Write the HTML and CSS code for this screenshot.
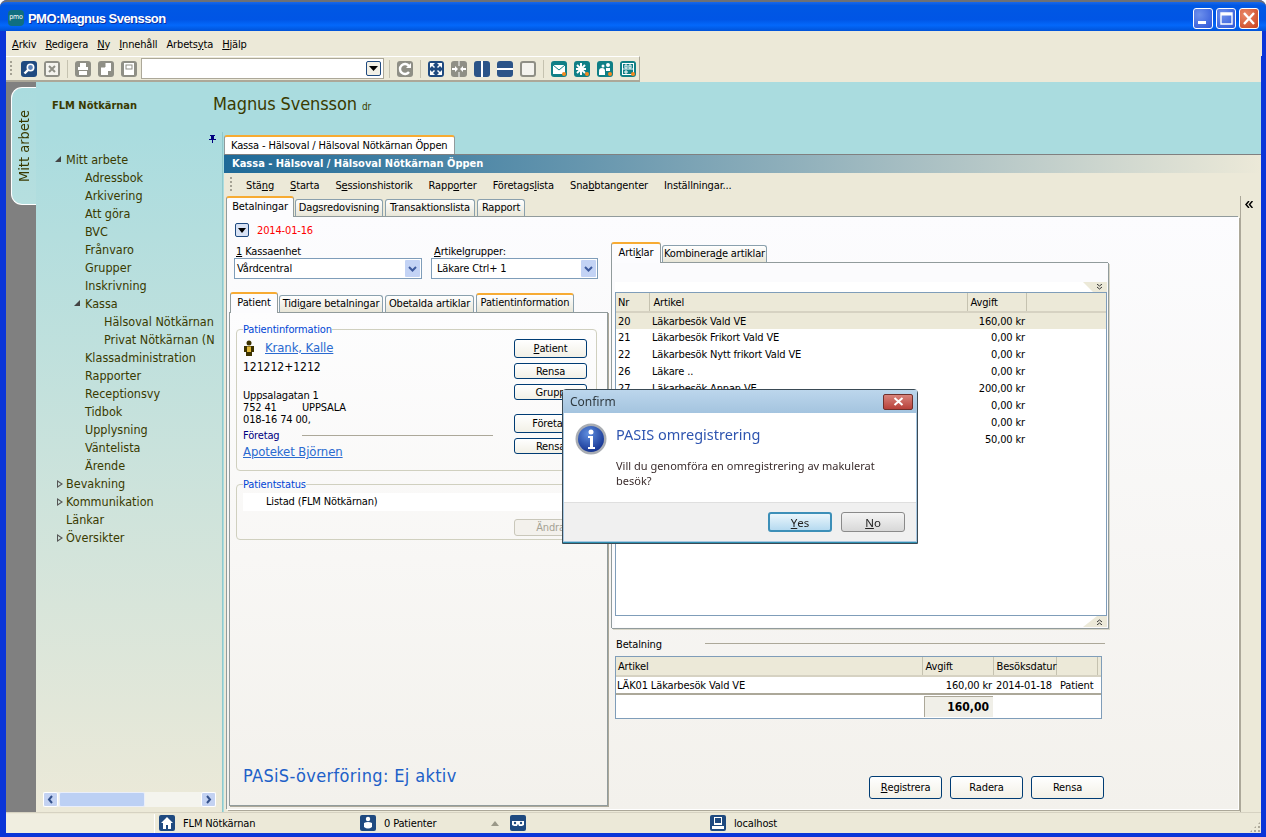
FILE: index.html
```html
<!DOCTYPE html>
<html lang="sv">
<head>
  <meta charset="UTF-8">
  <title>PMO:Magnus Svensson</title>
  <link rel="stylesheet" href="styles.css">
</head>
<body>
<div class="window">

  <!-- Titelrad -->
  <div class="titlebar">
    <span class="app-icon">pmo</span>
    <span class="title-text">PMO:Magnus Svensson</span>
    <div class="win-btns">
      <span class="win-btn"><svg width="20" height="21" viewBox="0 0 20 21"><rect x="5" y="13" width="8" height="3" fill="#fff"/></svg></span>
      <span class="win-btn"><svg width="20" height="21" viewBox="0 0 20 21"><path d="M5 5h11v11H5z" fill="none" stroke="#fff" stroke-width="1.4"/><rect x="5" y="5" width="11" height="2.5" fill="#fff"/></svg></span>
      <span class="win-btn win-close"><svg width="20" height="21" viewBox="0 0 20 21"><path d="M5 5l10 11M15 5L5 16" stroke="#fff" stroke-width="2.4"/></svg></span>
    </div>
  </div>

  <!-- Meny -->
  <div class="menubar">
    <span><u>A</u>rkiv</span>
    <span><u>R</u>edigera</span>
    <span><u>N</u>y</span>
    <span><u>I</u>nnehåll</span>
    <span>Arbets<u>y</u>ta</span>
    <span><u>H</u>jälp</span>
  </div>

  <!-- Verktygsrad -->
  <div class="toolbar-row">
    <div class="toolbar">
      <span class="grip"></span>
      <svg class="tool" viewBox="0 0 16 16"><rect width="16" height="16" rx="3" fill="#1f4a80"/><circle cx="9.500" cy="6.500" r="3.200" fill="#5b82b8" stroke="#fff" stroke-width="1.600"/><path d="M7 9l-3.500 3.500" stroke="#fff" stroke-width="2.400"/></svg>
      <svg class="tool" viewBox="0 0 16 16"><rect width="16" height="16" rx="3" fill="#8f8f86"/><rect x="2" y="2" width="12" height="12" fill="#f4f3ee"/><path d="M5 5l6 6M11 5l-6 6" stroke="#8f8f86" stroke-width="2"/></svg>
      <span class="tool-sep"></span>
      <svg class="tool" viewBox="0 0 16 16"><rect width="16" height="16" rx="3" fill="#8f8f86"/><path d="M5 2h6v4h2v3H3V6h2zM4 10h8v4H4z" fill="#fff"/></svg>
      <svg class="tool" viewBox="0 0 16 16"><rect width="16" height="16" rx="3" fill="#8f8f86"/><path d="M7 2h6v8h-3v4H3V6h4z" fill="#fff"/><path d="M7 2v4H3" fill="none" stroke="#8f8f86"/></svg>
      <svg class="tool" viewBox="0 0 16 16"><rect width="16" height="16" rx="3" fill="#8f8f86"/><rect x="3" y="2" width="10" height="12" fill="#fff"/><rect x="5" y="4" width="6" height="4" fill="none" stroke="#8f8f86"/></svg>
      <div class="tool-combo"><span class="combo-drop"><svg width="9" height="5" viewBox="0 0 9 5"><path d="M0 0h9L4.500 5z" fill="#000"/></svg></span></div>
      <span class="tool-sep"></span>
      <svg class="tool" viewBox="0 0 16 16"><rect width="16" height="16" rx="3" fill="#8f8f86"/><path d="M12 5a5 5 0 1 0 0 6" fill="none" stroke="#fff" stroke-width="2.400"/><path d="M9 7h5V2z" fill="#fff"/></svg>
      <span class="tool-sep"></span>
      <svg class="tool" viewBox="0 0 16 16"><rect width="16" height="16" rx="3" fill="#1f4a80"/><path d="M2 2h5L5 4l2 2-1 1-2-2-2 2zM14 2v5l-2-2-2 2-1-1 2-2-2-2zM2 14V9l2 2 2-2 1 1-2 2 2 2zM14 14H9l2-2-2-2 1-1 2 2 2-2z" fill="#fff"/></svg>
      <svg class="tool" viewBox="0 0 16 16"><rect width="16" height="16" rx="3" fill="#8f8f86"/><path d="M7 8l-3-3v2H1v2h3v2zM9 8l3-3v2h3v2h-3v2z" fill="#fff"/><path d="M8 0v5M8 11v5" stroke="#fff"/></svg>
      <svg class="tool" viewBox="0 0 16 16"><rect width="16" height="16" rx="3" fill="#2b5488"/><rect x="7" width="2" height="16" fill="#fff"/></svg>
      <svg class="tool" viewBox="0 0 16 16"><rect width="16" height="16" rx="3" fill="#2b5488"/><rect y="7" width="16" height="2" fill="#fff"/></svg>
      <svg class="tool" viewBox="0 0 16 16"><rect width="16" height="16" rx="3" fill="#8f8f86"/><rect x="2" y="2" width="12" height="12" rx="1" fill="#f4f3ee"/></svg>
      <span class="tool-sep"></span>
      <svg class="tool" viewBox="0 0 16 16"><rect width="16" height="16" rx="3" fill="#0f7f86"/><path d="M2 4h12v9H2z" fill="#fff"/><path d="M2 4l6 5 6-5" fill="none" stroke="#0f7f86"/><circle cx="13" cy="13" r="2" fill="#f58a1f"/></svg>
      <svg class="tool" viewBox="0 0 16 16"><rect width="16" height="16" rx="3" fill="#0f7f86"/><path d="M7 2v12M2 8h10M3 4l8 8M11 4l-8 8" stroke="#fff" stroke-width="2"/><circle cx="13" cy="13" r="2" fill="#f58a1f"/></svg>
      <svg class="tool" viewBox="0 0 16 16"><rect width="16" height="16" rx="3" fill="#0f7f86"/><circle cx="5" cy="10" r="3" fill="#fff"/><circle cx="6" cy="5" r="1.500" fill="#fff"/><circle cx="11" cy="4" r="2" fill="#fff"/><path d="M9 7h4v3H9z" fill="#fff"/><path d="M2 11h6v3H2z" fill="#fff"/><circle cx="13" cy="13" r="2" fill="#f58a1f"/></svg>
      <svg class="tool" viewBox="0 0 16 16"><rect width="16" height="16" rx="3" fill="#0f7f86"/><rect x="2.500" y="2.500" width="11" height="11" fill="none" stroke="#fff"/><path d="M3 8h10M5 4h2v3H5zM9 4h2v3H9zM5 10h2v2H5z" stroke="#fff" fill="none"/><circle cx="13" cy="13" r="2" fill="#f58a1f"/></svg>
    </div>
  </div>

  <div class="workspace">
    <!-- Vänster flik -->
    <div class="rail">
      <div class="rail-tab"><span>Mitt arbete</span></div>
    </div>

    <div class="stage">
      <div class="brand-row">
        <div class="brand-org">FLM Nötkärnan</div>
        <div class="brand-name">Magnus Svensson <small>dr</small></div>
      </div>

      <div class="lower">
        <!-- Navigering -->
        <div class="nav">
          <div class="nav-pin"><svg width="7" height="8" viewBox="0 0 7 8"><path d="M1 0h5v1H5v3h2v1H4v3H3V5H0V4h2V1H1z" fill="#00007f"/></svg></div>
          <ul class="tree">
            <li class="lvl0"><i class="arrow-open"></i>Mitt arbete</li>
            <li class="lvl1">Adressbok</li>
            <li class="lvl1">Arkivering</li>
            <li class="lvl1">Att göra</li>
            <li class="lvl1">BVC</li>
            <li class="lvl1">Frånvaro</li>
            <li class="lvl1">Grupper</li>
            <li class="lvl1">Inskrivning</li>
            <li class="lvl1"><i class="arrow-open"></i>Kassa</li>
            <li class="lvl2">Hälsoval Nötkärnan</li>
            <li class="lvl2">Privat Nötkärnan (N</li>
            <li class="lvl1">Klassadministration</li>
            <li class="lvl1">Rapporter</li>
            <li class="lvl1">Receptionsvy</li>
            <li class="lvl1">Tidbok</li>
            <li class="lvl1">Upplysning</li>
            <li class="lvl1">Väntelista</li>
            <li class="lvl1">Ärende</li>
            <li class="lvl0"><i class="arrow-closed"></i>Bevakning</li>
            <li class="lvl0"><i class="arrow-closed"></i>Kommunikation</li>
            <li class="lvl0">Länkar</li>
            <li class="lvl0"><i class="arrow-closed"></i>Översikter</li>
          </ul>
          <div class="hscroll">
            <span class="hs-btn"><svg width="7" height="9" viewBox="0 0 7 9"><path d="M5 1L2 4.500 5 8" fill="none" stroke="#33508a" stroke-width="2"/></svg></span>
            <span class="hs-thumb"></span>
            <span class="hs-btn"><svg width="7" height="9" viewBox="0 0 7 9"><path d="M2 1l3 3.500L2 8" fill="none" stroke="#33508a" stroke-width="2"/></svg></span>
          </div>
        </div>

        <!-- Dokument -->
        <div class="doc">
          <div class="doc-tabs"><span class="doc-tab">Kassa - Hälsoval / Hälsoval Nötkärnan Öppen</span></div>
          <div class="doc-frame">
            <div class="doc-caption">Kassa - Hälsoval / Hälsoval Nötkärnan Öppen</div>
            <div class="doc-menu">
              <span class="grip"></span>
              <span>Stä<u>n</u>g</span>
              <span><u>S</u>tarta</span>
              <span>S<u>e</u>ssionshistorik</span>
              <span>Rapp<u>o</u>rter</span>
              <span>Företags<u>l</u>ista</span>
              <span>Sna<u>b</u>btangenter</span>
              <span>Inställningar...</span>
            </div>
            <div class="doc-body">
              <div class="doc-main">
                <div class="tabs">
                  <span class="tab active tab-betal">Betalningar</span>
                  <span class="tab tab-dags">Dagsredovisning</span>
                  <span class="tab tab-trans">Transaktionslista</span>
                  <span class="tab tab-rapport">Rapport</span>
                </div>
                <div class="tab-panel">

                  <!-- Vänster kolumn -->
                  <div class="col-left">
                    <div class="date-row">
                      <span class="date-btn"><svg width="8" height="5" viewBox="0 0 8 5"><path d="M0 0h8L4 5z" fill="#000"/></svg></span>
                      <span class="date-text">2014-01-16</span>
                    </div>
                    <div class="fields">
                      <div class="field field-a">
                        <label><u>1</u> Kassaenhet</label>
                        <div class="combo">Vårdcentral<span class="combo-arrow"><svg width="9" height="6" viewBox="0 0 9 6"><path d="M1 1l3.500 3.500L8 1" fill="none" stroke="#3d5a9e" stroke-width="2"/></svg></span></div>
                      </div>
                      <div class="field field-b">
                        <label><u>A</u>rtikelgrupper:</label>
                        <div class="combo">Läkare Ctrl+ 1<span class="combo-arrow"><svg width="9" height="6" viewBox="0 0 9 6"><path d="M1 1l3.500 3.500L8 1" fill="none" stroke="#3d5a9e" stroke-width="2"/></svg></span></div>
                      </div>
                    </div>
                    <div class="tabs tabs-sub">
                      <span class="tab active tab-patient">Patient</span>
                      <span class="tab tab-tidigare">Tidi<u>g</u>are betalningar</span>
                      <span class="tab tab-obetalda">Obetalda artiklar</span>
                      <span class="tab tab-flag">Patientinformation</span>
                    </div>
                    <div class="sub-panel">
                      <fieldset class="group">
                        <legend>Patientinformation</legend>
                        <div class="pat-body">
                          <div class="pat-info">
                            <div class="pat-name">
                              <svg width="12" height="16" viewBox="0 0 12 16"><circle cx="6" cy="3" r="2.500" fill="#3d3300"/><path d="M1 6h10v6H9v4H3v-4H1z" fill="#3d3300"/><path d="M4 6.500h4V12H4z" fill="#e0b93a"/></svg>
                              <a class="link">Krank, Kalle</a>
                            </div>
                            <div class="pat-id">121212+1212</div>
                            <div class="pat-addr">
                              <div>Uppsalagatan 1</div>
                              <div class="addr-city"><span>752 41</span><span>UPPSALA</span></div>
                              <div>018-16 74 00,</div>
                            </div>
                            <div class="pat-sep"><span>Företag</span><i></i></div>
                            <a class="link link-block">Apoteket Björnen</a>
                          </div>
                          <div class="pat-btns">
                            <span class="btn"><u>P</u>atient</span>
                            <span class="btn btn-low">Rensa</span>
                            <span class="btn btn-low">Grupp</span>
                            <span class="btn btn-gap">Företag</span>
                            <span class="btn btn-low">Rensa</span>
                          </div>
                        </div>
                      </fieldset>
                      <fieldset class="group group-status">
                        <legend>Patientstatus</legend>
                        <div class="status-row">Listad (FLM Nötkärnan)</div>
                        <div class="status-foot"><span class="btn btn-off">Ändra</span></div>
                      </fieldset>
                      <div class="pasis">PASiS-överföring: Ej aktiv</div>
                    </div>
                  </div>

                  <!-- Höger kolumn -->
                  <div class="col-right">
                    <div class="tabs">
                      <span class="tab active tab-artiklar">Arti<u>k</u>lar</span>
                      <span class="tab tab-komb">Kombinera<u>d</u>e artiklar</span>
                    </div>
                    <div class="list-panel">
                      <div class="list-edge"><span class="corner corner-top"><svg width="7" height="6" viewBox="0 0 7 6"><path d="M1 0l2.500 2L6 0M1 3l2.500 2L6 3" fill="none" stroke="#333"/></svg></span></div>
                      <div class="grid">
                        <table class="data art-table">
                          <thead><tr><th>Nr</th><th>Artikel</th><th>Avgift</th><th></th></tr></thead>
                          <tbody>
                            <tr class="sel"><td>20</td><td>Läkarbesök Vald VE</td><td class="num">160,00 kr</td><td></td></tr>
                            <tr><td>21</td><td>Läkarbesök Frikort Vald VE</td><td class="num">0,00 kr</td><td></td></tr>
                            <tr><td>22</td><td>Läkarbesök Nytt frikort Vald VE</td><td class="num">0,00 kr</td><td></td></tr>
                            <tr><td>26</td><td>Läkare ..</td><td class="num">0,00 kr</td><td></td></tr>
                            <tr><td>27</td><td>Läkarbesök Annan VE</td><td class="num">200,00 kr</td><td></td></tr>
                            <tr><td></td><td></td><td class="num">0,00 kr</td><td></td></tr>
                            <tr><td></td><td></td><td class="num">0,00 kr</td><td></td></tr>
                            <tr><td></td><td></td><td class="num">50,00 kr</td><td></td></tr>
                          </tbody>
                        </table>
                      </div>
                      <div class="list-edge list-edge-low"><span class="corner corner-low"><svg width="7" height="6" viewBox="0 0 7 6"><path d="M1 3l2.500-2L6 3M1 6l2.500-2L6 6" fill="none" stroke="#333"/></svg></span></div>
                    </div>
                    <div class="pay-head"><span>Betalning</span><i></i></div>
                    <div class="pay-box">
                      <table class="data pay-table">
                        <thead><tr><th>Artikel</th><th>Avgift</th><th>Besöksdatur</th><th></th><th></th></tr></thead>
                        <tbody>
                          <tr><td>LÄK01 Läkarbesök Vald VE</td><td class="num">160,00 kr</td><td>2014-01-18</td><td colspan="2">Patient</td></tr>
                        </tbody>
                      </table>
                      <div class="pay-sum"><span>160,00</span></div>
                    </div>
                    <div class="pay-btns">
                      <span class="btn btn-big"><u>R</u>egistrera</span>
                      <span class="btn btn-big">Radera</span>
                      <span class="btn btn-big">Rensa</span>
                    </div>
                  </div>
                </div>
              </div>
              <div class="doc-side"><svg width="8" height="7" viewBox="0 0 8 7"><path d="M4 0L1 3.500 4 7M7.500 0l-3 3.500 3 3.500" fill="none" stroke="#000" stroke-width="1.500"/></svg></div>
            </div>
          </div>
        </div>
      </div>
    </div>
  </div>

  <!-- Statusrad -->
  <div class="statusbar">
    <div class="st st-a"></div>
    <div class="st st-b">
      <svg width="16" height="16" viewBox="0 0 16 16"><rect width="16" height="16" rx="2" fill="#1f4a80"/><path d="M8 2l6 6h-2v6H9v-4H7v4H4V8H2z" fill="#fff"/></svg>
      <span>FLM Nötkärnan</span>
    </div>
    <div class="st st-c">
      <svg width="16" height="16" viewBox="0 0 16 16"><rect width="16" height="16" rx="2" fill="#1f4a80"/><circle cx="8" cy="4" r="2.200" fill="#fff"/><path d="M4 8q4-2 8 0v4q-4 3-8 0z" fill="#fff"/></svg>
      <span>0 Patienter</span>
      <i class="st-arrow"></i>
    </div>
    <div class="st st-d">
      <svg width="16" height="16" viewBox="0 0 16 16"><rect width="16" height="16" rx="2" fill="#1f4a80"/><path d="M2 6h12v4l-2 1H9L8 9l-1 2H4l-2-1z" fill="#fff"/><circle cx="5" cy="8" r="1.200" fill="#1f4a80"/><circle cx="11" cy="8" r="1.200" fill="#1f4a80"/></svg>
    </div>
    <div class="st st-e">
      <svg width="16" height="16" viewBox="0 0 16 16"><rect width="16" height="16" rx="2" fill="#1f4a80"/><rect x="4" y="2" width="8" height="8" fill="#fff"/><rect x="5" y="3" width="6" height="5" fill="#1f4a80"/><rect x="2" y="11" width="12" height="3" fill="#fff"/></svg>
      <span>localhost</span>
    </div>
    <div class="st-grip"></div>
  </div>

  <!-- Dialog -->
  <div class="dialog">
    <div class="dlg-title">
      <span>Confirm</span>
      <span class="dlg-close"><svg width="11" height="9" viewBox="0 0 11 9"><path d="M1.500 1l8 7M9.500 1l-8 7" stroke="#fff" stroke-width="2"/></svg></span>
    </div>
    <div class="dlg-body">
      <svg class="dlg-icon" width="32" height="32" viewBox="0 0 32 32">
        <defs><radialGradient id="infoBlue" cx="40%" cy="30%" r="75%"><stop offset="0" stop-color="#5f8fe0"/><stop offset="1" stop-color="#12308e"/></radialGradient></defs>
        <circle cx="16" cy="16" r="15.500" fill="#a9adb3"/>
        <circle cx="16" cy="16" r="13" fill="url(#infoBlue)"/>
        <circle cx="16" cy="9" r="2.500" fill="#fff"/>
        <path d="M13 13h5v11h2v2h-7v-2h2v-9h-2z" fill="#fff"/>
      </svg>
      <div>
        <div class="dlg-head">PASIS omregistrering</div>
        <div class="dlg-text">Vill du genomföra en omregistrering av makulerat besök?</div>
      </div>
    </div>
    <div class="dlg-foot">
      <span class="dlg-btn dlg-default"><u>Y</u>es</span>
      <span class="dlg-btn"><u>N</u>o</span>
    </div>
  </div>
</div>
</body>
</html>
```

FILE: styles.css
```css
* { box-sizing: border-box; }

html, body {
  margin: 0;
  padding: 0;
  overflow: hidden;
}

body {
  font-family: "DejaVu Sans Condensed", "Liberation Sans", sans-serif;
  font-size: 11px;
  letter-spacing: -0.15px;
  color: #000;
}

ul { margin: 0; padding: 0; list-style: none; }
i { display: block; font-style: normal; }

.window {
  position: relative;
  width: 1266px;
  height: 837px;
  display: flex;
  flex-direction: column;
  padding: 0 5px 4px 6px;
  background: #0a35d8;
  border-radius: 7px 7px 0 0;
}

/* titelrad */
.titlebar {
  height: 31px;
  margin: 0 -5px 0 -6px;
  padding: 3px 7px 0 8px;
  display: flex;
  align-items: center;
  border-top: 2px solid #6d7076;
  border-radius: 7px 7px 0 0;
  background: linear-gradient(#1a68e8 0, #0058e4 12%, #0055e5 60%, #0368fb 80%, #0053d8 100%);
}
.app-icon {
  width: 16px;
  height: 16px;
  border-radius: 4px;
  background: #0f6f80;
  color: #fff;
  font-size: 7px;
  line-height: 15px;
  text-align: center;
}
.title-text {
  margin-left: 4px;
  color: #fff;
  font-family: "Liberation Sans", sans-serif;
  font-size: 13px;
  font-weight: bold;
  letter-spacing: -0.55px;
  text-shadow: 1px 1px 0 #0a2fa0;
}
.win-btns {
  margin-left: auto;
  display: flex;
  gap: 3px;
}
.win-btn {
  width: 20px;
  height: 21px;
  border: 1px solid #fff;
  border-radius: 3px;
  background: radial-gradient(circle at 30% 30%, #6d90ec, #2c55d8);
  display: block;
  overflow: hidden;
}
.win-btn svg { display: block; margin: -1px; }
.win-close { background: radial-gradient(circle at 30% 30%, #ea8a6a, #c8401c); }

/* meny */
.menubar {
  height: 25px;
  margin-right: -1px;
  padding: 1px 0 0 6px;
  display: flex;
  align-items: center;
  gap: 9px;
  background: #ece9d8;
}

.toolbar-row {
  height: 26px;
  background: #ece9d8;
}
.toolbar {
  width: 634px;
  height: 26px;
  padding-left: 4px;
  display: flex;
  align-items: center;
  gap: 7px;
  border-top: 1px solid #fff;
  border-right: 1px solid #aca899;
  border-bottom: 2px solid #aca899;
}
.grip {
  width: 2px;
  height: 16px;
  margin-right: 2px;
  background: repeating-linear-gradient(#a5a294 0 2px, transparent 2px 4px);
}
.tool { width: 16px; height: 16px; flex: none; }
.tool-sep { width: 1px; height: 18px; background: #c5c2b0; }
.tool-combo {
  width: 243px;
  height: 21px;
  margin-left: -3px;
  margin-right: -2px;
  padding: 2px 2px 2px 0;
  display: flex;
  justify-content: flex-end;
  background: #fff;
  border: 1px solid #aca899;
}
.combo-drop {
  width: 15px;
  height: 15px;
  border: 1px solid #1f4a80;
  border-radius: 2px;
  background: #f2f0e6;
  display: flex;
  align-items: center;
  justify-content: center;
}

/* arbetsyta */
.workspace {
  flex: 1;
  min-height: 0;
  display: flex;
}
.rail {
  width: 30px;
  padding: 5px 0 0 5px;
  background: #808080;
}
.rail-tab {
  height: 118px;
  display: flex;
  align-items: center;
  justify-content: center;
  border: 1px solid #fff;
  border-right: none;
  border-radius: 11px 0 0 11px;
  background: linear-gradient(#aadcdf, #b6dfdf);
}
.rail-tab span {
  writing-mode: vertical-rl;
  transform: rotate(180deg);
  font-size: 14.500px;
  letter-spacing: 0;
  color: #3a3a00;
}

.stage {
  flex: 1;
  min-width: 0;
  display: flex;
  flex-direction: column;
  background: #aadcdf;
}
.brand-row {
  height: 50px;
  padding-top: 11px;
  display: flex;
}
.brand-org {
  width: 177px;
  padding: 6px 0 0 16px;
  font-weight: bold;
  letter-spacing: 0;
  color: #3a3a00;
}
.brand-name {
  font-size: 18px;
  letter-spacing: -0.1px;
  color: #3a3a00;
}
.brand-name small { font-size: 10px; }

.lower {
  flex: 1;
  min-height: 0;
  display: flex;
}

/* navigering */
.nav {
  width: 187px;
  display: flex;
  flex-direction: column;
  border-right: 1px solid #8fc8cc;
  background: linear-gradient(#aadcdf, #ece9d8);
  color: #3a3a00;
  letter-spacing: 0;
}
.nav-pin {
  height: 19px;
  padding: 3px 6px 0 0;
  display: flex;
  justify-content: flex-end;
}
.tree { font-size: 12.500px; }
.tree li {
  position: relative;
  height: 18px;
  line-height: 18px;
  white-space: nowrap;
  overflow: hidden;
}
.lvl0 { padding-left: 30px; }
.lvl1 { padding-left: 49px; }
.lvl2 { padding-left: 68px; }
.arrow-open, .arrow-closed {
  display: inline-block;
  width: 0;
  height: 0;
  position: absolute;
  top: 5px;
}
.lvl0 .arrow-open { left: 19px; }
.lvl1 .arrow-open { left: 38px; }
.arrow-open {
  border-left: 6px solid transparent;
  border-bottom: 6px solid #444;
}
.arrow-closed {
  left: 21px;
  width: 6px;
  height: 8px;
  background: #555;
  clip-path: polygon(0 0, 100% 50%, 0 100%, 0 0, 1px 2px, 1px 6px, 4px 4px, 1px 2px);
}
.hscroll {
  height: 15px;
  margin: auto 6px 5px 7px;
  display: flex;
  background: #f4f4ee;
}
.hs-btn {
  width: 15px;
  display: flex;
  align-items: center;
  justify-content: center;
  border-radius: 2px;
  background: #c3d2f2;
  border: 1px solid #fff;
}
.hs-thumb {
  width: 86px;
  margin: 0 auto 0 1px;
  background: #bcd0f4;
  border: 1px solid #e9eefb;
  border-radius: 2px;
}

/* dokument */
.doc {
  flex: 1;
  min-width: 0;
  padding-left: 1px;
  display: flex;
  flex-direction: column;
}
.doc-tabs {
  height: 22px;
  padding-top: 3px;
  display: flex;
}
.doc-tab {
  width: 231px;
  height: 20px;
  padding: 0 6px;
  line-height: 17px;
  background: #fff;
  border: 1px solid #919b9c;
  border-top: 2px solid #f7ab33;
  border-bottom: none;
  border-radius: 3px 3px 0 0;
  white-space: nowrap;
}
.doc-frame {
  flex: 1;
  min-height: 0;
  display: flex;
  flex-direction: column;
  background: #ece9d8;
  border-top: 1px solid #808080;
}
.doc-caption {
  height: 18px;
  padding-left: 8px;
  line-height: 18px;
  color: #fff;
  font-weight: bold;
  letter-spacing: 0;
  background: linear-gradient(90deg, #1f6a98, #ece9d8);
}
.doc-menu {
  height: 23px;
  padding: 1px 0 0 6px;
  display: flex;
  align-items: center;
  gap: 16px;
}
.doc-menu .grip { margin-right: -2px; }
.doc-body {
  flex: 1;
  min-height: 0;
  display: flex;
}
.doc-main {
  width: 1016px;
  padding-left: 2px;
  display: flex;
  flex-direction: column;
}
.doc-side {
  flex: 1;
  padding: 5px 0 0 4px;
  border-left: 1px solid #aca899;
}
.doc-side svg { display: block; }

/* flikar */
.tabs {
  height: 20px;
  display: flex;
  align-items: flex-end;
  gap: 2px;
  position: relative;
}
.tab {
  height: 17px;
  line-height: 16px;
  text-align: center;
  white-space: nowrap;
  background: linear-gradient(#fff, #e8e6d8);
  border: 1px solid #8aa0ad;
  border-bottom: none;
  border-radius: 3px 3px 0 0;
}
.tab.active {
  height: 21px;
  margin: 0 -1px -1px 0;
  position: relative;
  line-height: 17px;
  background: #fcfcfe;
  border-color: #919b9c;
  border-top: 2px solid #f7ab33;
}
.tab-flag {
  height: 19px;
  line-height: 16px;
  border-top: 2px solid #f7ab33;
}
.tab-betal { width: 68px; }
.tab-dags { width: 88px; }
.tab-trans { width: 90px; }
.tab-rapport { width: 48px; }
.tab-patient { width: 48px; }
.tab-tidigare { width: 104px; }
.tab-obetalda { width: 89px; }
.tab-flag { width: 98px; }
.tab-artiklar { width: 50px; }
.tab-komb { width: 105px; }

.tab-panel {
  flex: 1;
  min-height: 0;
  margin-bottom: 3px;
  width: 1012px;
  padding-left: 2px;
  display: flex;
  gap: 3px;
  background: linear-gradient(#fcfcfe, #f3f1ec);
  border-left: 1px solid #919b9c;
  border-top: 1px solid #919b9c;
  box-shadow: 1px 1px 0 #fff, 2px 2px 0 #aca899;
}

.col-left {
  width: 379px;
  padding-top: 6px;
  display: flex;
  flex-direction: column;
}
.date-row {
  height: 14px;
  padding-left: 6px;
  display: flex;
  align-items: center;
}
.date-btn {
  width: 14px;
  height: 14px;
  display: flex;
  align-items: center;
  justify-content: center;
  background: #d8e2f4;
  border: 1px solid #1f4a80;
  border-radius: 2px;
}
.date-text {
  margin-left: 8px;
  color: #f00;
}
.fields {
  margin-top: 8px;
  display: flex;
}
.field label {
  display: block;
  height: 13px;
  padding-left: 2px;
  line-height: 13px;
}
.field-a { width: 188px; margin-left: 5px; }
.field-b { width: 167px; margin-left: 9px; }
.field-b label { padding-left: 3px; }
.combo {
  height: 21px;
  padding-left: 2px;
  display: flex;
  align-items: center;
  justify-content: space-between;
  background: #fff;
  border: 1px solid #7f9db9;
}
.field-b .combo { padding-left: 5px; }
.combo-arrow {
  width: 15px;
  height: 17px;
  margin-right: 1px;
  display: flex;
  align-items: center;
  justify-content: center;
  background: #c3d3f5;
  border-radius: 1px;
}
.tabs-sub { margin-top: 13px; padding-left: 1px; }
.sub-panel {
  flex: 1;
  min-height: 0;
  margin-bottom: 3px;
  padding: 10px 10px 19px 6px;
  display: flex;
  flex-direction: column;
  background: linear-gradient(#fdfdfe, #f3f1ec);
  border: 1px solid #919b9c;
  box-shadow: 1px 1px 0 #aca899;
}
.group {
  margin: 0;
  padding: 0 9px 10px 6px;
  border: 1px solid #d0d0bf;
  border-radius: 4px;
}
.group legend {
  padding: 0;
  line-height: 13px;
  color: #0046d5;
}
.group-status { margin-top: 7px; padding-bottom: 3px; }
.pat-body {
  display: flex;
  justify-content: space-between;
}
.pat-info { padding-top: 3px; }
.pat-name {
  height: 17px;
  display: flex;
  align-items: center;
  gap: 10px;
}
.link {
  color: #2a6ad0;
  font-size: 13px;
  letter-spacing: -0.1px;
  text-decoration: underline;
}
.pat-id {
  height: 18px;
  line-height: 22px;
  font-size: 12px;
  letter-spacing: 0;
}
.pat-addr {
  margin-top: 16px;
  line-height: 12px;
}
.addr-city { display: flex; }
.addr-city span:first-child { width: 59px; }
.pat-sep {
  height: 14px;
  margin-top: 2px;
  display: flex;
  align-items: center;
  color: #00007f;
}
.pat-sep span { width: 59px; }
.pat-sep i {
  width: 191px;
  height: 1px;
  background: #aca899;
}
.link-block {
  display: block;
  height: 16px;
  margin-top: 2px;
}
.pat-btns {
  width: 73px;
  padding-top: 3px;
  display: flex;
  flex-direction: column;
  gap: 5px;
}
.btn {
  height: 19px;
  display: flex;
  align-items: center;
  justify-content: center;
  white-space: nowrap;
  background: linear-gradient(#fff, #f2f0e6);
  border: 1px solid #003c74;
  border-radius: 3px;
}
.btn-low { height: 16px; }
.btn-gap { margin-top: 9px; }
.btn-off {
  width: 73px;
  height: 17px;
  color: #a5a294;
  background: #f3f1ec;
  border-color: #c9c7ba;
}
.btn-big { width: 73px; height: 23px; }
.status-row {
  height: 18px;
  margin-top: 2px;
  padding-left: 23px;
  line-height: 18px;
  background: #fff;
}
.status-foot {
  margin-top: 8px;
  display: flex;
  justify-content: flex-end;
}
.pasis {
  margin: auto 0 0 7px;
  font-size: 18px;
  letter-spacing: 0.35px;
  line-height: 20px;
  color: #2060c8;
}

.col-right {
  width: 498px;
  padding-top: 25px;
  display: flex;
  flex-direction: column;
}
.list-panel {
  width: 497px;
  height: 366px;
  padding: 19px 0 0 3px;
  background: #fbfbfd;
  border-left: 1px solid #919b9c;
  border-top: 1px solid #919b9c;
  box-shadow: 1px 1px 0 #919b9c, 2px 2px 0 #d8d6c8;
}
.list-edge {
  width: 492px;
  height: 10px;
  display: flex;
  justify-content: flex-end;
  background: #fff;
}
.list-edge-low { height: 11px; }
.corner {
  width: 24px;
  display: flex;
  align-items: center;
  justify-content: flex-end;
  padding-right: 4px;
  background: #ece9d8;
}
.corner-top { clip-path: polygon(0 0, 100% 0, 100% 100%, 10px 100%); }
.corner-low { clip-path: polygon(14px 0, 100% 0, 100% 100%, 0 100%); }
.grid {
  width: 492px;
  height: 324px;
  background: #fff;
  border: 1px solid #7f9db9;
}
.data {
  width: 100%;
  table-layout: fixed;
  border-collapse: collapse;
}
.data th {
  height: 19px;
  padding: 0 0 0 2px;
  text-align: left;
  font-weight: normal;
  background: #ece9d8;
  border-bottom: 2px solid #d6d2c2;
  border-right: 1px solid #c5c2b0;
}
.data th:last-child { border-right: none; }
.data td {
  height: 17px;
  padding: 0 1px;
  white-space: nowrap;
  overflow: hidden;
}
.data .num { text-align: right; }
.art-table th:nth-child(1) { width: 33px; }
.art-table th:nth-child(2) { width: 318px; padding-left: 4px; }
.art-table th:nth-child(3) { width: 59px; padding-left: 3px; }
.art-table td:nth-child(1) { padding-left: 2px; }
.art-table td:nth-child(2) { padding-left: 3px; }
.art-table .sel td { background: #ece9d8; }

.pay-head {
  height: 14px;
  margin-top: 10px;
  padding-left: 5px;
  display: flex;
}
.pay-head span { width: 89px; }
.pay-head i {
  width: 400px;
  height: 1px;
  margin-top: 5px;
  background: #aca899;
}
.pay-box {
  width: 487px;
  margin: 4px 0 0 4px;
  background: #fff;
  border: 1px solid #7f9db9;
}
.pay-table th:nth-child(1) { width: 306px; }
.pay-table th:nth-child(2) { width: 71px; padding-left: 3px; }
.pay-table th:nth-child(3) { width: 63px; padding-left: 3px; }
.pay-table th:nth-child(4) { width: 41px; }
.pay-table td:nth-child(3) { padding-left: 3px; }
.pay-table td:nth-child(4) { padding-left: 4px; }
.pay-sum {
  height: 25px;
  padding: 1px 0 0 308px;
  border-top: 2px solid #aca899;
}
.pay-sum span {
  display: block;
  width: 69px;
  height: 21px;
  padding-right: 4px;
  line-height: 21px;
  text-align: right;
  font-weight: bold;
  font-size: 12px;
  letter-spacing: 0;
  background: #f0efe8;
  border-left: 1px solid #aca899;
  border-top: 1px solid #aca899;
}
.pay-btns {
  margin: auto 5px 10px 0;
  display: flex;
  justify-content: flex-end;
  gap: 8px;
}

/* statusrad */
.statusbar {
  height: 21px;
  display: flex;
  align-items: flex-end;
  background: #ece9d8;
  border-top: 1px solid #d6d2c2;
}
.st {
  height: 19px;
  display: flex;
  align-items: center;
  padding-bottom: 1px;
}
.st span { margin-left: 8px; }
.st-a { width: 148px; background: #f0eee0; }
.st-b { width: 202px; padding-left: 4px; border-left: 1px solid #fff; }
.st-c { width: 151px; padding-left: 4px; }
.st-d { width: 199px; padding-left: 3px; }
.st-e { padding-left: 4px; }
.st-arrow {
  margin-left: 55px;
  width: 0;
  height: 0;
  border-left: 4px solid transparent;
  border-right: 4px solid transparent;
  border-bottom: 5px solid #9a9888;
}
.st-grip {
  width: 12px;
  height: 12px;
  margin-left: auto;
  background: radial-gradient(circle, #aca899 1px, transparent 1.500px) 0 0 / 4px 4px;
  clip-path: polygon(100% 0, 100% 100%, 0 100%);
}

/* dialog */
.dialog {
  position: absolute;
  left: 562px;
  top: 389px;
  width: 356px;
  height: 155px;
  display: flex;
  flex-direction: column;
  padding: 1px 1px 2px 1px;
  border: 1px solid #3a4a55;
  border-radius: 4px 4px 0 0;
  background: #a8c8e2;
  font-family: "Noto Sans", "Liberation Sans", sans-serif;
  letter-spacing: 0;
  filter: blur(0.3px);
  box-shadow: inset 0 -1px 0 #2f8fb0;
}
.dlg-title {
  height: 23px;
  margin: -1px -1px 0 -1px;
  padding: 0 4px 0 7px;
  display: flex;
  align-items: center;
  justify-content: space-between;
  font-size: 12px;
  color: #2f3a40;
  background: linear-gradient(#bcd6ec, #a4c4df);
}
.dlg-close {
  width: 30px;
  height: 16px;
  display: flex;
  align-items: center;
  justify-content: center;
  border: 1px solid #70302c;
  border-radius: 2px;
  background: linear-gradient(#d8837b, #b8413a);
}
.dlg-body {
  height: 89px;
  padding: 10px 0 0 11px;
  display: flex;
  gap: 9px;
  background: #fff;
}
.dlg-icon { flex: none; }
.dlg-head {
  font-size: 14.500px;
  line-height: 23px;
  color: #2f55b0;
}
.dlg-text {
  width: 270px;
  margin-top: 12px;
  font-size: 11px;
  line-height: 15px;
  color: #3a2c2c;
}
.dlg-foot {
  flex: 1;
  padding: 9px 11px 0 0;
  display: flex;
  justify-content: flex-end;
  gap: 9px;
  background: #f0f0f0;
  border-top: 1px solid #dfdfdf;
}
.dlg-btn {
  width: 64px;
  height: 20px;
  display: flex;
  align-items: center;
  justify-content: center;
  font-size: 11.500px;
  color: #222;
  background: linear-gradient(#f4f4f4, #d8d8d8);
  border: 1px solid #8a8a8a;
  border-radius: 3px;
}
.dlg-default {
  background: linear-gradient(#eaf6fc, #b6daf0);
  border: 2px solid #3c8fb8;
}
```
